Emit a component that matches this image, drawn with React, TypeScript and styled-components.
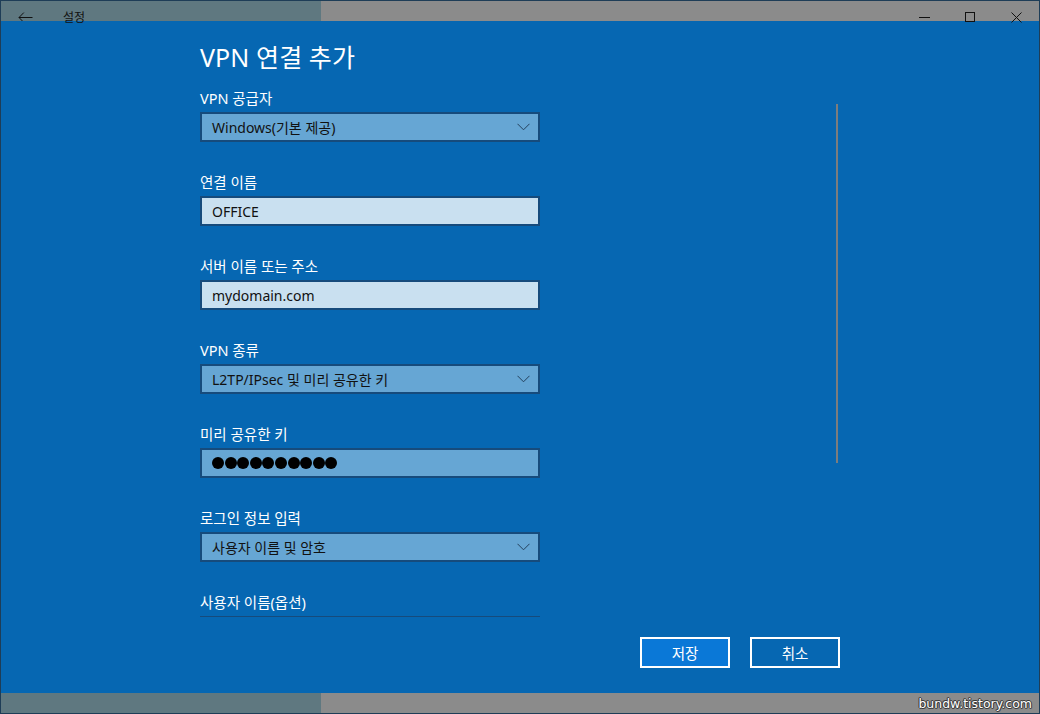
import React from 'react';
import styled, { createGlobalStyle } from 'styled-components';

const GlobalStyle = createGlobalStyle`
  html, body {
    margin: 0;
    padding: 0;
    background: #1e3d57;
  }
  * {
    box-sizing: border-box;
  }
`;

const Window = styled.div`
  width: 1040px;
  height: 714px;
  border: 1px solid #1e3d57;
  display: flex;
  flex-direction: column;
  font-family: "Noto Sans", "Noto Sans CJK KR", sans-serif;
  overflow: hidden;
`;

const Bar = styled.div`
  height: 20px;
  display: flex;
  flex-shrink: 0;
`;

const BarLeft = styled.div`
  width: 320px;
  background: #5f7880;
  display: flex;
  align-items: flex-start;
  padding: 10px 0 0 17px;
  color: #111;
  font-size: 12px;
  overflow: visible;
`;

const BarRight = styled.div`
  flex: 1;
  background: #8b8b8b;
  display: flex;
  justify-content: flex-end;
  align-items: flex-start;
  padding-top: 11px;
  overflow: visible;
`;

const TitleText = styled.span`
  margin-left: 30px;
  line-height: 13px;
  position: relative;
  z-index: 2;
`;

const ControlButton = styled.div`
  width: 46px;
  height: 10px;
  display: flex;
  justify-content: center;
  position: relative;
  z-index: 2;
`;

const Main = styled.div`
  flex: 1;
  background: #0667b2;
  display: flex;
  flex-direction: column;
`;

const Scroller = styled.div`
  height: 596px;
  overflow: hidden;
  display: flex;
  justify-content: space-between;
  padding: 0 201px 0 199px;
`;

const Form = styled.div`
  width: 340px;
  padding-top: 20px;
`;

const Heading = styled.h1`
  margin: 0 0 15px;
  font-weight: 400;
  font-size: 25px;
  line-height: 32px;
  color: #fff;
  letter-spacing: 0.1px;
`;

const Field = styled.div`
  margin-bottom: 30px;
`;

const Label = styled.div`
  color: #fff;
  font-size: 14.5px;
  line-height: 20px;
  margin-bottom: 4px;
`;

const Box = styled.div<{ $kind: 'select' | 'text' }>`
  height: 30px;
  border: 2px solid #164b7c;
  background: ${p => (p.$kind === 'select' ? '#66a6d4' : '#c9e0f0')};
  display: flex;
  align-items: center;
  justify-content: space-between;
  padding: 0 8px 0 10px;
  font-size: 14px;
  color: #111;
`;

const Dots = styled.div`
  display: flex;
  gap: 0.6px;
`;

const Dot = styled.span`
  width: 12px;
  height: 12px;
  border-radius: 50%;
  background: #000;
`;

const ScrollTrack = styled.div`
  width: 2px;
  height: 359px;
  margin-top: 83px;
  background: #7d7d7d;
`;

const Footer = styled.div`
  flex: 1;
  display: flex;
  justify-content: flex-end;
  gap: 20px;
  padding: 20px 199px 0 0;
`;

const ActionButton = styled.button<{ $primary?: boolean }>`
  width: 90px;
  height: 31px;
  border: 2px solid #fff;
  background: ${p => (p.$primary ? '#0a78d7' : 'transparent')};
  color: #fff;
  font-family: "Noto Sans", "Noto Sans CJK KR", sans-serif;
  font-size: 14.5px;
  padding: 0;
  cursor: pointer;
`;

const BottomBar = styled.div`
  height: 20px;
  display: flex;
  flex-shrink: 0;
`;

const BottomLeft = styled.div`
  width: 320px;
  background: #5f7880;
`;

const BottomRight = styled.div`
  flex: 1;
  background: #8b8b8b;
  display: flex;
  justify-content: flex-end;
  align-items: center;
  padding-right: 7px;
`;

const Watermark = styled.span`
  font-family: "DejaVu Sans", sans-serif;
  font-weight: 400;
  font-size: 12.5px;
  color: #fff;
  text-shadow: 1px 0 0 #3a3a3a, -1px 0 0 #3a3a3a, 0 1px 0 #3a3a3a, 0 -1px 0 #3a3a3a,
    1px 1px 0 #666, -1px -1px 0 #666;
`;

const Chevron = () => (
  <svg width="13" height="8" viewBox="0 0 13 8">
    <polyline points="0.5,0.8 6.5,6.8 12.5,0.8" fill="none" stroke="#24405c" strokeWidth="1" />
  </svg>
);

interface FieldSpec {
  label: string;
  kind: 'select' | 'text' | 'password';
  value?: string;
}

const fields: FieldSpec[] = [
  { label: 'VPN 공급자', kind: 'select', value: 'Windows(기본 제공)' },
  { label: '연결 이름', kind: 'text', value: 'OFFICE' },
  { label: '서버 이름 또는 주소', kind: 'text', value: 'mydomain.com' },
  { label: 'VPN 종류', kind: 'select', value: 'L2TP/IPsec 및 미리 공유한 키' },
  { label: '미리 공유한 키', kind: 'password' },
  { label: '로그인 정보 입력', kind: 'select', value: '사용자 이름 및 암호' },
  { label: '사용자 이름(옵션)', kind: 'text', value: '' },
];

const App: React.FC = () => {
  return (
    <>
      <GlobalStyle />
      <Window>
        <Bar>
          <BarLeft>
            <svg width="15" height="11" viewBox="0 0 15 11" style={{ marginTop: 1 }}>
              <path d="M14.5 5.5H1M5.8 0.6L1 5.5l4.8 4.9" fill="none" stroke="#111" strokeWidth="1" />
            </svg>
            <TitleText>설정</TitleText>
          </BarLeft>
          <BarRight>
            <ControlButton>
              <svg width="11" height="10" viewBox="0 0 11 10">
                <line x1="0" y1="5.5" x2="11" y2="5.5" stroke="#111" strokeWidth="1" />
              </svg>
            </ControlButton>
            <ControlButton>
              <svg width="10" height="10" viewBox="0 0 10 10">
                <rect x="0.5" y="0.5" width="9" height="9" fill="none" stroke="#111" strokeWidth="1" />
              </svg>
            </ControlButton>
            <ControlButton>
              <svg width="11" height="11" viewBox="0 0 11 11">
                <path d="M0.5 0.5l10 10M10.5 0.5l-10 10" stroke="#111" strokeWidth="1" />
              </svg>
            </ControlButton>
          </BarRight>
        </Bar>
        <Main>
          <Scroller>
            <Form>
              <Heading>VPN 연결 추가</Heading>
              {fields.map((f, i) => (
                <Field key={i}>
                  <Label>{f.label}</Label>
                  {f.kind === 'password' ? (
                    <Box $kind="select">
                      <Dots>
                        {Array.from({ length: 10 }).map((_, j) => (
                          <Dot key={j} />
                        ))}
                      </Dots>
                    </Box>
                  ) : (
                    <Box $kind={f.kind}>
                      <span>{f.value}</span>
                      {f.kind === 'select' && <Chevron />}
                    </Box>
                  )}
                </Field>
              ))}
            </Form>
            <ScrollTrack />
          </Scroller>
          <Footer>
            <ActionButton $primary>저장</ActionButton>
            <ActionButton>취소</ActionButton>
          </Footer>
        </Main>
        <BottomBar>
          <BottomLeft />
          <BottomRight>
            <Watermark>bundw.tistory.com</Watermark>
          </BottomRight>
        </BottomBar>
      </Window>
    </>
  );
};

export default App;
